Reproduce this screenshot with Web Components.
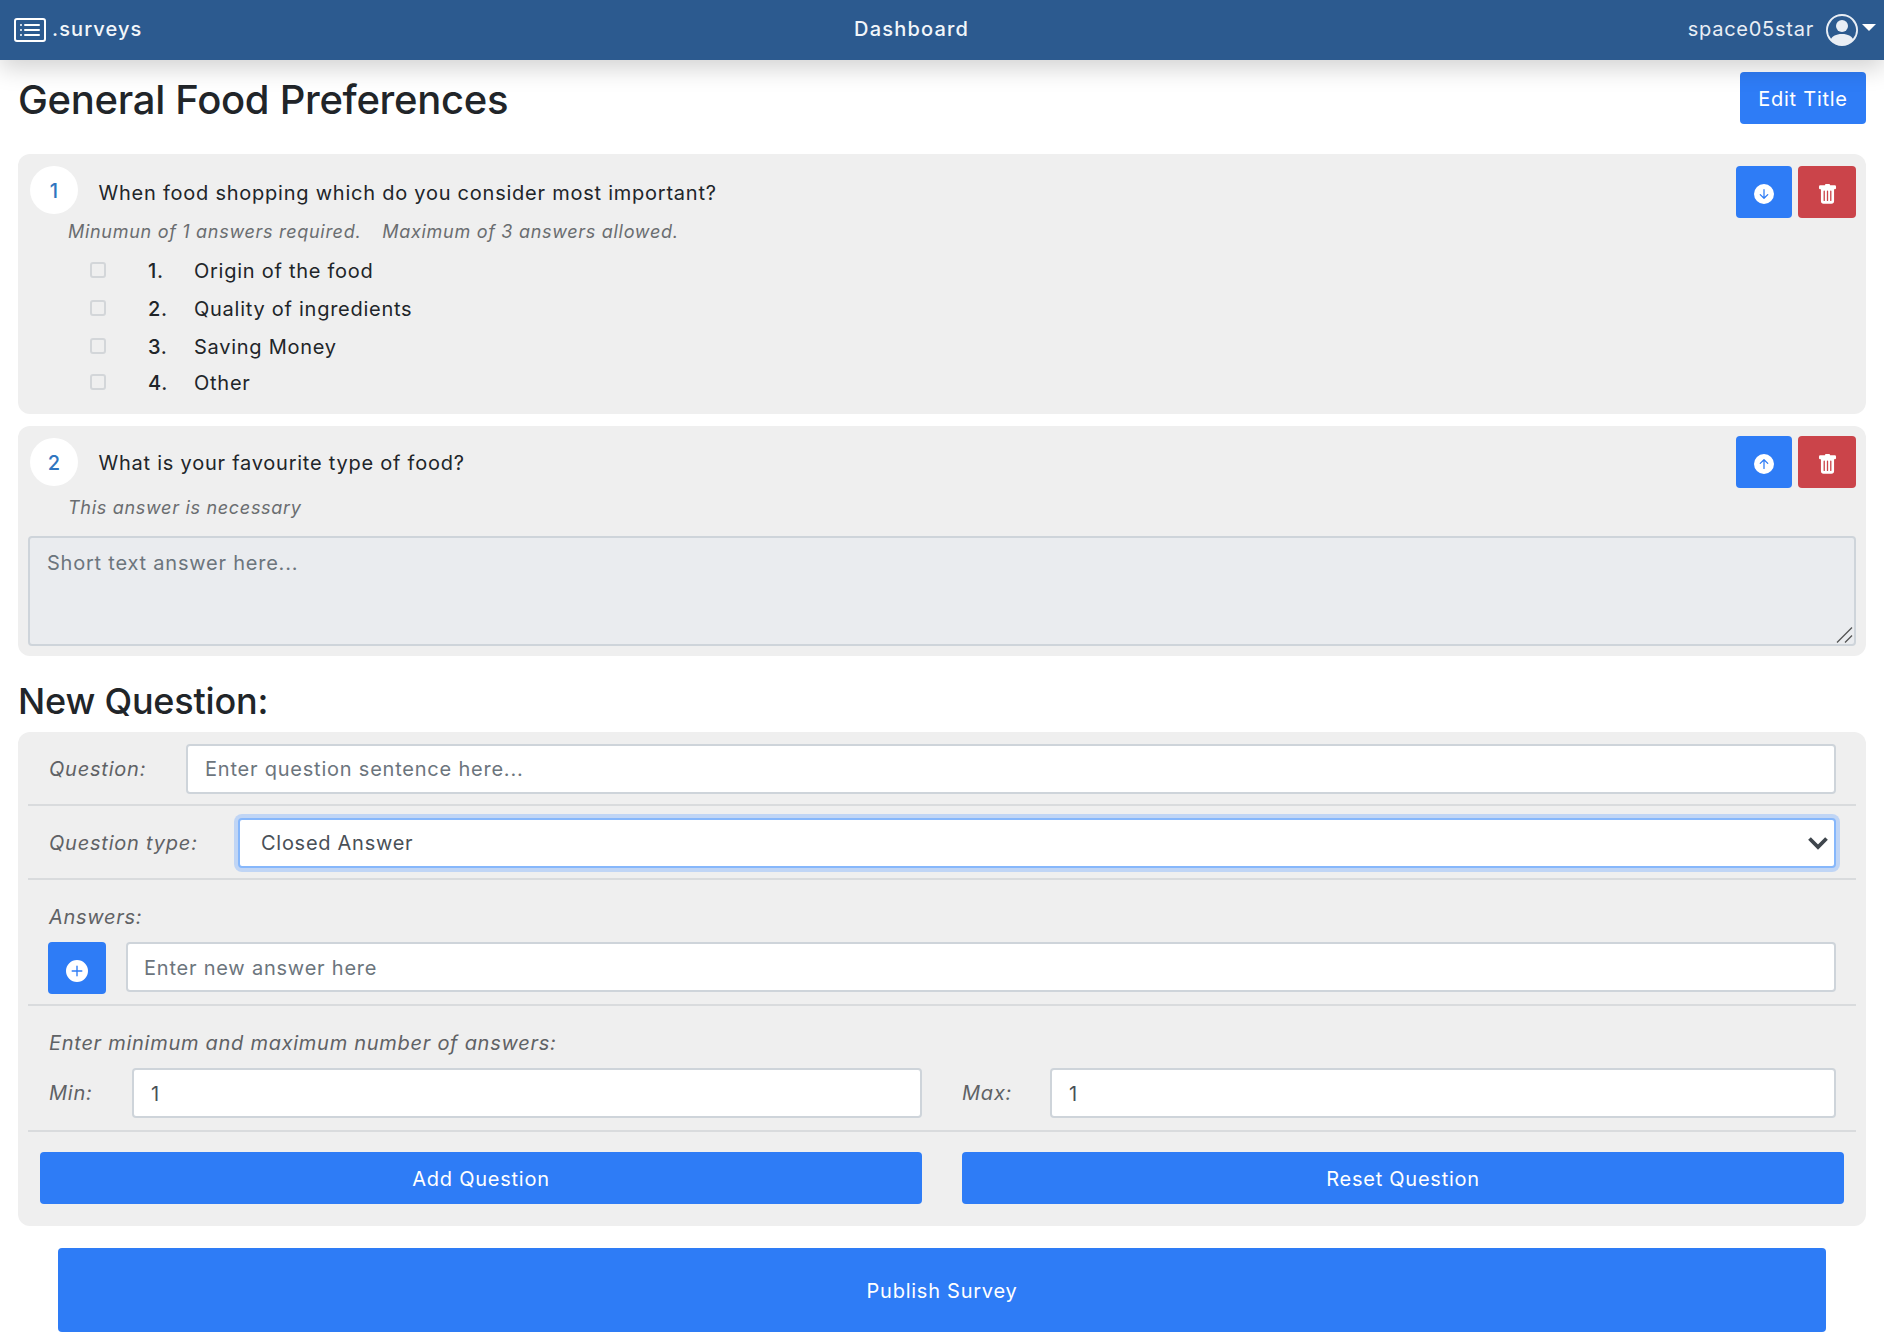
<!DOCTYPE html>
<html lang="en">
<head>
<meta charset="utf-8">
<title>Survey editor</title>
<style>
  html, body { margin: 0; padding: 0; background: #fff; }
  body { font-family: Inter, "Liberation Sans", sans-serif; font-size: 20px; color: #212529; }
</style>
</head>
<body>
<survey-nav brand=".surveys" center="Dashboard" user="space05star"></survey-nav>
<survey-page>
  <survey-title text="General Food Preferences" action="Edit Title"></survey-title>

  <question-card n="1" text="When food shopping which do you consider most important?" dir="down" style="padding-bottom:15px">
    <question-note style="height:26px;margin-bottom:7px"><span>Minumun of 1 answers required.</span><span style="margin-left:21px">Maximum of 3 answers allowed.</span></question-note>
    <answer-item n="1" text="Origin of the food"></answer-item>
    <answer-item n="2" text="Quality of ingredients"></answer-item>
    <answer-item n="3" text="Saving Money"></answer-item>
    <answer-item n="4" text="Other" style="height:34px"></answer-item>
  </question-card>

  <question-card n="2" text="What is your favourite type of food?" dir="up" offset style="padding-bottom:10px">
    <question-note style="height:38px;margin-bottom:10px">This answer is necessary</question-note>
    <answer-preview placeholder="Short text answer here..."></answer-preview>
  </question-card>

  <new-question></new-question>
  <publish-bar label="Publish Survey"></publish-bar>
</survey-page>

<script>
const ICONS = {
  list: '<path d="M14.5 3a.5.5 0 0 1 .5.5v9a.5.5 0 0 1-.5.5h-13a.5.5 0 0 1-.5-.5v-9a.5.5 0 0 1 .5-.5h13zm-13-1A1.5 1.5 0 0 0 0 3.5v9A1.5 1.5 0 0 0 1.5 14h13a1.5 1.5 0 0 0 1.5-1.5v-9A1.5 1.5 0 0 0 14.5 2h-13z"/><path d="M5 8a.5.5 0 0 1 .5-.5h7a.5.5 0 0 1 0 1h-7A.5.5 0 0 1 5 8zm0-2.5a.5.5 0 0 1 .5-.5h7a.5.5 0 0 1 0 1h-7a.5.5 0 0 1-.5-.5zm0 5a.5.5 0 0 1 .5-.5h7a.5.5 0 0 1 0 1h-7a.5.5 0 0 1-.5-.5zm-1-5a.5.5 0 1 1-1 0 .5.5 0 0 1 1 0zM4 8a.5.5 0 1 1-1 0 .5.5 0 0 1 1 0zm0 2.5a.5.5 0 1 1-1 0 .5.5 0 0 1 1 0z"/>',
  person: '<path d="M11 6a3 3 0 1 1-6 0 3 3 0 0 1 6 0z"/><path fill-rule="evenodd" d="M0 8a8 8 0 1 1 16 0A8 8 0 0 1 0 8zm8-7a7 7 0 0 0-5.468 11.37C3.242 11.226 4.805 10 8 10s4.757 1.225 5.468 2.37A7 7 0 0 0 8 1z"/>',
  down: '<path d="M16 8A8 8 0 1 1 0 8a8 8 0 0 1 16 0zM8.5 4.5a.5.5 0 0 0-1 0v5.793L5.354 8.146a.5.5 0 1 0-.708.708l3 3a.5.5 0 0 0 .708 0l3-3a.5.5 0 0 0-.708-.708L8.5 10.293V4.5z"/>',
  up: '<path d="M16 8A8 8 0 1 0 0 8a8 8 0 0 0 16 0zm-7.5 3.5a.5.5 0 0 1-1 0V5.707L5.354 7.854a.5.5 0 1 1-.708-.708l3-3a.5.5 0 0 1 .708 0l3 3a.5.5 0 0 1-.708.708L8.5 5.707V11.5z"/>',
  plus: '<path d="M16 8A8 8 0 1 1 0 8a8 8 0 0 1 16 0zM8.5 4.5a.5.5 0 0 0-1 0v3h-3a.5.5 0 0 0 0 1h3v3a.5.5 0 0 0 1 0v-3h3a.5.5 0 0 0 0-1h-3v-3z"/>',
  trash: '<path d="M2.5 1a1 1 0 0 0-1 1v1a1 1 0 0 0 1 1H3v9a2 2 0 0 0 2 2h6a2 2 0 0 0 2-2V4h.5a1 1 0 0 0 1-1V2a1 1 0 0 0-1-1H10a1 1 0 0 0-1-1H7a1 1 0 0 0-1 1H2.5zm3 4a.5.5 0 0 1 .5.5v7a.5.5 0 0 1-1 0v-7a.5.5 0 0 1 .5-.5zM8 5a.5.5 0 0 1 .5.5v7a.5.5 0 0 1-1 0v-7A.5.5 0 0 1 8 5zm3 .5v7a.5.5 0 0 1-1 0v-7a.5.5 0 0 1 1 0z"/>'
};
const icon = (name, size) => `<svg xmlns="http://www.w3.org/2000/svg" width="${size}" height="${size}" viewBox="0 0 16 16" fill="currentColor" aria-hidden="true">${ICONS[name]}</svg>`;

class Base extends HTMLElement {
  render(html) { if (!this.shadowRoot) this.attachShadow({mode:'open'}); this.shadowRoot.innerHTML = html; }
  attr(n) { return this.getAttribute(n) || ''; }
}

customElements.define('survey-nav', class extends Base {
  connectedCallback() {
    this.render(`<style>
      :host { display:flex; align-items:center; justify-content:space-between; height:60px; background:#2c5a8f; color:#fff;
        box-shadow:0 8px 24px rgba(0,0,0,.18); padding:0 8px 0 14px; box-sizing:border-box; position:relative; z-index:2; }
      .brand, .user { display:flex; align-items:center; }
      .brand span { margin-left:6px; font-weight:500; color:#f2f6fa; letter-spacing:1.1px; padding-bottom:2px; }
      .user { color:#e9eef5; }
      .user span { margin-right:12px; letter-spacing:.75px; padding-bottom:2px; }
      .center { font-weight:500; letter-spacing:1.2px; color:#f2f6fa; padding-bottom:2px; margin-right:7px; }
      .caret { width:0; height:0; border-left:7px solid transparent; border-right:7px solid transparent; border-top:7px solid #fff; margin:0 0 6px 4px; }
      svg { display:block; }
    </style>
    <div class="brand">${icon('list',32)}<span>${this.attr('brand')}</span></div>
    <div class="center">${this.attr('center')}</div>
    <div class="user"><span>${this.attr('user')}</span>${icon('person',32)}<i class="caret"></i></div>`);
  }
});

customElements.define('survey-page', class extends Base {
  connectedCallback() {
    this.render(`<style>:host { display:block; padding:0 18px 10px; }</style><slot></slot>`);
  }
});

customElements.define('survey-button', class extends Base {
  connectedCallback() {
    this.render(`<style>
      :host { display:inline-flex; align-items:center; justify-content:center; box-sizing:border-box; height:52px; background:#2e7cf6; color:#fff;
        border-radius:4px; font-size:20px; letter-spacing:.75px; padding-top:2px; }
      :host([danger]) { background:#cb444a; }
    </style><slot></slot>`);
  }
});

customElements.define('survey-title', class extends Base {
  connectedCallback() {
    this.render(`<style>
      :host { display:flex; justify-content:space-between; align-items:flex-start; height:82px; padding-top:12px; }
      h1 { margin:5px 0 0; font-size:40px; line-height:46px; font-weight:500; color:#212529; letter-spacing:-.3px; }
      survey-button { width:126px; }
    </style><h1>${this.attr('text')}</h1><survey-button>${this.attr('action')}</survey-button>`);
  }
});

customElements.define('question-card', class extends Base {
  connectedCallback() {
    const offset = this.hasAttribute('offset');
    this.render(`<style>
      :host { display:block; background:#efefef; border-radius:12px; padding:12px 10px 0 12px; margin-bottom:12px; }
      .head { display:flex; align-items:flex-start; height:${offset?50:52}px; }
      .num { flex:none; width:48px; height:48px; border-radius:50%; background:#fff; color:#2f75c0; display:flex; align-items:center; justify-content:center; font-weight:500; padding-top:1px; box-sizing:border-box; }
      .text { flex:1; margin-left:20.5px; line-height:${offset?50:54}px; height:48px; letter-spacing:.76px; color:#212529; }
      .actions { display:flex; gap:6px; margin-top:${offset?-2:0}px; }
      .b1 { width:56px; padding-top:4px; } .b2 { width:58px; padding-top:4px; }
      svg { display:block; }
    </style>
    <div class="head"><div class="num">${this.attr('n')}</div><div class="text">${this.attr('text')}</div>
      <div class="actions"><survey-button class="b1">${icon(this.attr('dir'),20)}</survey-button><survey-button class="b2" danger>${icon('trash',21)}</survey-button></div></div>
    <slot></slot>`);
  }
});

customElements.define('question-note', class extends Base {
  connectedCallback() {
    this.render(`<style>:host { display:flex; align-items:center; padding-left:38px; font-style:italic; font-size:18px; color:#6a6d70; letter-spacing:.7px; }</style><slot></slot>`);
  }
});

customElements.define('answer-item', class extends Base {
  connectedCallback() {
    this.render(`<style>
      :host { display:flex; align-items:center; height:38px; padding-left:60px; letter-spacing:.74px; }
      input { appearance:none; margin:0; width:16px; height:16px; box-sizing:border-box; background:#efefef; border:2px solid #d3d6d9; border-radius:3px; flex:none; }
      span { padding-top:2px; }
      .n { margin-left:42px; width:46px; font-weight:500; }
    </style><input type="checkbox" disabled aria-label="${this.attr('text')}"><span class="n">${this.attr('n')}.</span><span>${this.attr('text')}</span>`);
  }
});

customElements.define('answer-preview', class extends Base {
  connectedCallback() {
    this.render(`<style>
      :host { display:block; margin-left:-2px; position:relative; }
      textarea { display:block; width:100%; height:110px; box-sizing:border-box; background:#eaecef; border:2px solid #ced4da; border-radius:4px;
        padding:13px 17px; font:20px Inter, "Liberation Sans", sans-serif; letter-spacing:.78px; resize:none; margin:0; outline:none; }
      textarea::placeholder { color:#6c757d; opacity:1; }
      svg { position:absolute; right:3px; bottom:3px; width:17px; height:16px; }
    </style><textarea readonly placeholder="${this.attr('placeholder')}"></textarea>
    <svg viewBox="0 0 17 16" aria-hidden="true"><path d="M1 15.5 L16 .5 M9 15.5 L16 8.5" stroke="#555" stroke-width="1.3" fill="none"/></svg>`);
  }
});

const fieldStyle = `
  input[type=text], select { box-sizing:border-box; height:50px; background:#fff; border:2px solid #ced4da; border-radius:4px; color:#495057;
    font:20px Inter, "Liberation Sans", sans-serif; letter-spacing:.78px; margin:0; outline:none; width:100%; display:block; }
  input::placeholder { color:#6c757d; opacity:1; }`;

customElements.define('form-field', class extends Base {
  connectedCallback() {
    const v = this.attr('value');
    const nudge = this.hasAttribute('nudge') ? 2 : 0;
    const pad = this.attr('pad') || 17;
    this.render(`<style>
      :host { display:flex; align-items:center; }
      label { flex:none; width:${this.attr('w')}px; font-style:italic; color:#5f6265; letter-spacing:.78px; }
      .wrap { flex:1; min-width:0; }
      ${fieldStyle}
      input[type=text] { padding:${nudge}px ${pad}px 0; }
    </style>${this.hasAttribute('label') ? `<label>${this.attr('label')}</label>` : ''}<div class="wrap"><input type="text" aria-label="${this.attr('label') || this.attr('placeholder')}" placeholder="${this.attr('placeholder')}" value="${v}"></div>`);
  }
});

customElements.define('form-select', class extends Base {
  connectedCallback() {
    this.render(`<style>
      :host { display:flex; align-items:center; }
      label { flex:none; width:${this.attr('w')}px; font-style:italic; color:#5f6265; letter-spacing:.78px; }
      .wrap { flex:1; position:relative; }
      ${fieldStyle}
      select { appearance:none; padding:0 21px; border-color:#86b7fb; box-shadow:0 0 0 4px #c0d5f5; letter-spacing:.72px; }
      svg { position:absolute; right:7px; top:17px; width:22px; height:16px; }
    </style><label>${this.attr('label')}</label><div class="wrap"><select aria-label="${this.attr('label')}"><option>${this.attr('value')}</option></select>
      <svg viewBox="0 0 22 16" aria-hidden="true"><path d="M2.5 3.5 L11 12 L19.5 3.5" fill="none" stroke="#3f464d" stroke-width="3.8"/></svg></div>`);
  }
});

customElements.define('form-section', class extends Base {
  connectedCallback() {
    this.render(`<style>
      :host { display:block; padding:0 20px 10px 21px; border-bottom:2px solid #d9dbdd; }
      :host([last]) { border:0; padding:8px 12px 22px 12px; }
    </style><slot></slot>`);
  }
});

customElements.define('form-caption', class extends Base {
  connectedCallback() {
    this.render(`<style>:host { display:flex; align-items:center; font-style:italic; color:#5f6265; letter-spacing:.72px; }</style><slot></slot>`);
  }
});

customElements.define('new-question', class extends Base {
  connectedCallback() {
    this.render(`<style>
      :host { display:block; }
      h2 { margin:0; font-size:36px; line-height:66px; height:64px; font-weight:500; color:#212529; letter-spacing:-.2px; }
      .card { background:#efefef; border-radius:12px; padding:12px 10px 0; }
      .answer { display:flex; gap:20px; align-items:flex-start; margin-left:-1px; }
      .answer survey-button { width:58px; flex:none; padding-top:6px; box-sizing:border-box; }
      .answer form-field { flex:1; }
      .grid { display:grid; grid-template-columns:873fr 874fr; column-gap:40px; }
      .btns { display:grid; grid-template-columns:1fr 1fr; column-gap:40px; margin-top:12px; }
      svg { display:block; }
    </style>
    <h2>New Question:</h2>
    <div class="card">
      <form-section><form-field w="137" label="Question:" placeholder="Enter question sentence here..."></form-field></form-section>
      <form-section style="padding-top:12px"><form-select w="189" label="Question type:" value="Closed Answer"></form-select></form-section>
      <form-section>
        <form-caption style="height:62px;padding-top:12px;box-sizing:border-box">Answers:</form-caption>
        <div class="answer"><survey-button>${icon('plus',22)}</survey-button><form-field nudge pad="16" placeholder="Enter new answer here"></form-field></div>
      </form-section>
      <form-section style="padding-bottom:12px">
        <form-caption style="height:62px;padding-top:18px;padding-bottom:6px;box-sizing:border-box">Enter minimum and maximum number of answers:</form-caption>
        <div class="grid"><form-field nudge w="83" label="Min:" value="1"></form-field><form-field nudge w="88" label="Max:" value="1"></form-field></div>
      </form-section>
      <form-section last><div class="btns"><survey-button>Add Question</survey-button><survey-button>Reset Question</survey-button></div></form-section>
    </div>`);
  }
});

customElements.define('publish-bar', class extends Base {
  connectedCallback() {
    this.render(`<style>
      :host { display:block; padding:22px 40px 0; }
      survey-button { display:flex; height:84px; }
    </style><survey-button>${this.attr('label')}</survey-button>`);
  }
});
</script>
</body>
</html>
